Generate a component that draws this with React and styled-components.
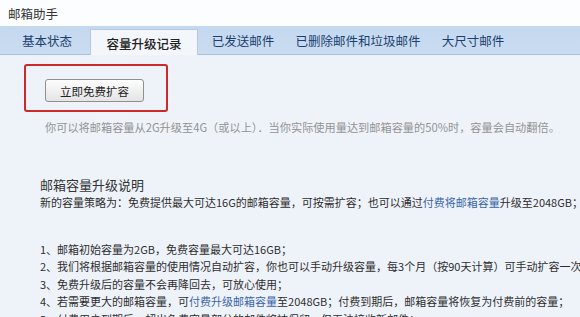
import React from "react";
import styled, { createGlobalStyle } from "styled-components";

const Global = createGlobalStyle`
  html, body { margin: 0; padding: 0; }
  body {
    background: #eef3fa;
    font-family: "Noto Sans CJK SC", "Noto Sans", sans-serif;
    overflow: hidden;
    width: 580px;
    height: 317px;
  }
`;

const Page = styled.div`
  width: 580px;
  height: 317px;
  overflow: hidden;
  display: flex;
  flex-direction: column;
`;

const TitleBar = styled.div`
  height: 26px;
  flex: none;
  display: flex;
  align-items: center;
  padding-left: 8px;
  background: #fcfdfe;
  color: #333;
  font-size: 12.5px;
`;

const TabBar = styled.div`
  height: 28px;
  flex: none;
  display: flex;
  align-items: flex-end;
  padding-left: 4px;
  background: linear-gradient(#c4d8ef, #c9dcf1);
  border-bottom: 1px solid #a9c1de;
`;

const Tab = styled.div`
  width: ${(p) => p.w}px;
  height: ${(p) => (p.active ? 26 : 28)}px;
  box-sizing: border-box;
  display: flex;
  align-items: center;
  justify-content: center;
  font-size: 12.5px;
  white-space: nowrap;
  color: ${(p) => (p.active ? "#222" : "#1c3f6e")};
  font-weight: ${(p) => (p.active ? 500 : 400)};
  background: ${(p) => (p.active ? "#f3f6fb" : "transparent")};
  border: ${(p) => (p.active ? "1px solid #b7c9df" : "none")};
  border-bottom: none;
  margin-bottom: ${(p) => (p.active ? "-1px" : "0")};
  padding-top: ${(p) => (p.active ? "1px" : "0")};
  position: relative;
`;

const Content = styled.div`
  flex: 1;
  padding-top: 9px;
  padding-left: 24px;
  display: flex;
  flex-direction: column;
  align-items: flex-start;
  white-space: nowrap;
`;

const Highlight = styled.div`
  width: 144px;
  height: 48px;
  box-sizing: border-box;
  border: 2px solid #cc2a2a;
  border-radius: 3px;
  padding: 13px 0 0 19px;
`;

const Button = styled.button`
  width: 99px;
  height: 23px;
  box-sizing: border-box;
  border: 1px solid #8f8f8f;
  border-radius: 3px;
  background: linear-gradient(#fdfdfd, #e4e4e4);
  font-family: inherit;
  font-size: 11.5px;
  color: #222;
  padding: 0;
  display: flex;
  align-items: center;
  justify-content: center;
`;

const Hint = styled.div`
  margin-top: 7px;
  margin-left: 21px;
  font-size: 11.2px;
  line-height: 17.5px;
  color: #939393;
`;

const Section = styled.div`
  margin-top: 39px;
  margin-left: 16px;
  display: flex;
  flex-direction: column;
  color: #2e2e2e;
`;

const Heading = styled.div`
  font-size: 13px;
  line-height: 18px;
  color: #333;
`;

const Line = styled.div`
  font-size: 11px;
  line-height: 17.5px;
  margin-top: ${(p) => p.gap || 0}px;
`;

const Link = styled.span`
  color: #3a64a6;
`;

const tabs = [
  { label: "基本状态", w: 86 },
  { label: "容量升级记录", w: 108, active: true },
  { label: "已发送邮件", w: 90 },
  { label: "已删除邮件和垃圾邮件", w: 140 },
  { label: "大尺寸邮件", w: 90 },
];

export default function App() {
  return (
    <Page>
      <Global />
      <TitleBar>邮箱助手</TitleBar>
      <TabBar>
        {tabs.map((t) => (
          <Tab key={t.label} w={t.w} active={t.active}>
            {t.label}
          </Tab>
        ))}
      </TabBar>
      <Content>
        <Highlight>
          <Button>立即免费扩容</Button>
        </Highlight>
        <Hint>
          你可以将邮箱容量从2G升级至4G（或以上）．当你实际使用量达到邮箱容量的50%时，容量会自动翻倍。
        </Hint>
        <Section>
          <Heading>邮箱容量升级说明</Heading>
          <Line>
            新的容量策略为：免费提供最大可达16G的邮箱容量，可按需扩容；也可以通过
            <Link>付费将邮箱容量</Link>升级至2048GB；
          </Line>
          <Line gap={29.5}>1、邮箱初始容量为2GB，免费容量最大可达16GB；</Line>
          <Line>
            2、我们将根据邮箱容量的使用情况自动扩容，你也可以手动升级容量，每3个月（按90天计算）可手动扩容一次；
          </Line>
          <Line>3、免费升级后的容量不会再降回去，可放心使用；</Line>
          <Line>
            4、若需要更大的邮箱容量，可<Link>付费升级邮箱容量</Link>
            至2048GB；付费到期后，邮箱容量将恢复为付费前的容量；
          </Line>
          <Line>5、付费用户到期后，超出免费容量部分的邮件将被保留，但无法接收新邮件；</Line>
        </Section>
      </Content>
    </Page>
  );
}
